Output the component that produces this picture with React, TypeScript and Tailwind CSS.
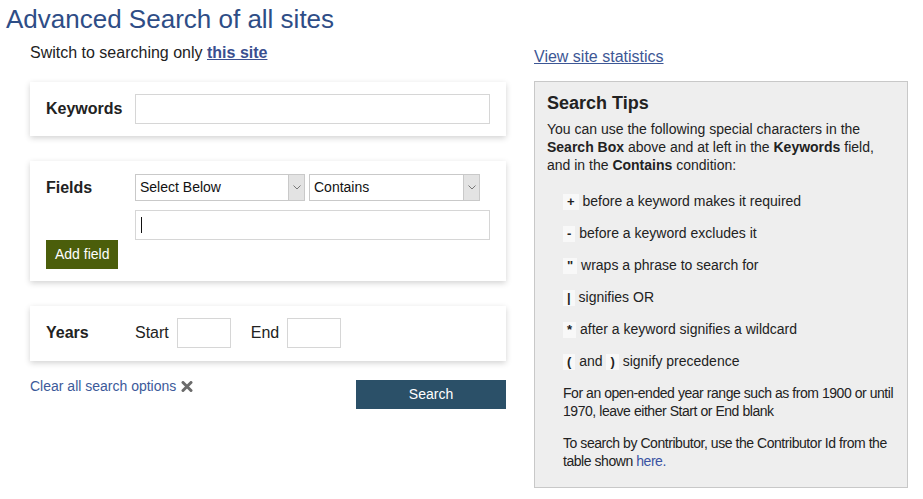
import type { ReactNode } from "react";

const card = "bg-white shadow-[0_2px_6px_rgba(0,0,0,0.18)]";
const inputBox = "border border-[#d6d6d6] bg-white";

function Chip({ children }: { children: ReactNode }) {
  return (
    <span className="inline-block bg-[#f8f8f8] px-[4px] text-[13px] font-bold leading-4 text-[#222]">
      {children}
    </span>
  );
}

function FakeSelect({ label, width }: { label: string; width: string }) {
  return (
    <div className={`flex h-[27px] ${width} items-stretch border border-[#c9c9c9] bg-white`}>
      <span className="flex flex-1 items-center pl-[4px] text-[14px] text-[#111]">{label}</span>
      <span className="flex w-[16px] items-center justify-center border-l border-[#c9c9c9] bg-[#e3e3e3]">
        <svg width="8" height="5" viewBox="0 0 8 5" fill="none">
          <path d="M0.5 0.5 L4 4 L7.5 0.5" stroke="#777" strokeWidth="1" />
        </svg>
      </span>
    </div>
  );
}

export default function App() {
  return (
    <div className="min-h-[499px] w-[923px] bg-white font-['Liberation_Sans',Arial,sans-serif] text-[#222]">
      <h1 className="pl-[6px] pt-[5px] text-[26px] leading-[29px] font-normal text-[#2e4d86]">
        Advanced Search of all sites
      </h1>

      <div className="flex">
        {/* left column */}
        <div className="ml-[30px] w-[476px]">
          <p className="mt-[10px] text-[16px] leading-[18px]">
            Switch to searching only{" "}
            <a href="#" className="font-bold text-[#3a4f8f] underline">
              this site
            </a>
          </p>

          <div className={`${card} mt-[20px] flex items-center px-4 py-3`}>
            <span className="w-[89px] text-[16px] font-bold">Keywords</span>
            <div className={`${inputBox} h-[30px] w-[355px]`} />
          </div>

          <div className={`${card} mt-[25px] px-4 pt-[13px] pb-3`}>
            <div className="flex items-center">
              <span className="w-[89px] text-[16px] font-bold">Fields</span>
              <div className="flex gap-[4px]">
                <FakeSelect label="Select Below" width="w-[170px]" />
                <FakeSelect label="Contains" width="w-[171px]" />
              </div>
            </div>
            <div className="mt-[9px] flex pl-[89px]">
              <div className={`${inputBox} flex h-[30px] w-[355px] items-center pl-[5px]`}>
                <span className="h-[16px] w-px bg-[#111]" />
              </div>
            </div>
            <button
              type="button"
              className="h-[29px] bg-[#4b5e0b] px-[9px] text-[14px] text-white"
            >
              Add field
            </button>
          </div>

          <div className={`${card} mt-[25px] flex items-center px-4 pt-3 pb-[13px]`}>
            <span className="w-[89px] text-[16px] font-bold">Years</span>
            <span className="text-[16px]">Start</span>
            <div className={`${inputBox} ml-[8px] h-[30px] w-[54px]`} />
            <span className="ml-[20px] text-[16px]">End</span>
            <div className={`${inputBox} ml-[8px] h-[30px] w-[54px]`} />
          </div>

          <div className="mt-[17px] flex items-start justify-between">
            <a href="#" className="flex items-center gap-[5px] text-[14px] leading-4 text-[#3c5a9a]">
              Clear all search options
              <svg width="12" height="11" viewBox="0 0 12 11">
                <path d="M2 1.5 L10 9.5 M10 1.5 L2 9.5" stroke="#6b6b6b" strokeWidth="3" strokeLinecap="round" />
              </svg>
            </a>
            <button
              type="button"
              className="mt-[2px] h-[29px] w-[150px] bg-[#2b5068] text-[14px] text-white"
            >
              Search
            </button>
          </div>
        </div>

        {/* right column */}
        <div className="ml-[28px] w-[374px]">
          <a href="#" className="mt-[14px] block text-[16px] leading-[18px] text-[#3d5795] underline">
            View site statistics
          </a>

          <div className="mt-[15px] border border-[#c8c8c8] bg-[#eeeeee] pl-[12px] pr-[10px] pt-[10px] pb-[17px] text-[14px] leading-[18px]">
            <h2 className="text-[18px] leading-[22px] font-bold">Search Tips</h2>
            <p className="mt-[6px]">
              You can use the following special characters in the <b>Search Box</b> above and at left in
              the <b>Keywords</b> field, and in the <b>Contains</b> condition:
            </p>
            <div className="mt-[18px] pl-4">
              <ul className="flex flex-col gap-[14px]">
                <li>
                  <Chip>+</Chip> before a keyword makes it required
                </li>
                <li>
                  <Chip>-</Chip> before a keyword excludes it
                </li>
                <li>
                  <Chip>"</Chip> wraps a phrase to search for
                </li>
                <li>
                  <Chip>|</Chip> signifies OR
                </li>
                <li>
                  <Chip>*</Chip> after a keyword signifies a wildcard
                </li>
                <li>
                  <Chip>(</Chip> and <Chip>)</Chip> signify precedence
                </li>
              </ul>
              <p className="mt-[14px] tracking-[-0.45px]">
                For an open-ended year range such as from 1900 or until 1970, leave either Start or End
                blank
              </p>
              <p className="mt-[14px] tracking-[-0.45px]">
                To search by Contributor, use the Contributor Id from the table shown{" "}
                <a href="#" className="text-[#3a53a3]">
                  here.
                </a>
              </p>
            </div>
          </div>
        </div>
      </div>
    </div>
  );
}
